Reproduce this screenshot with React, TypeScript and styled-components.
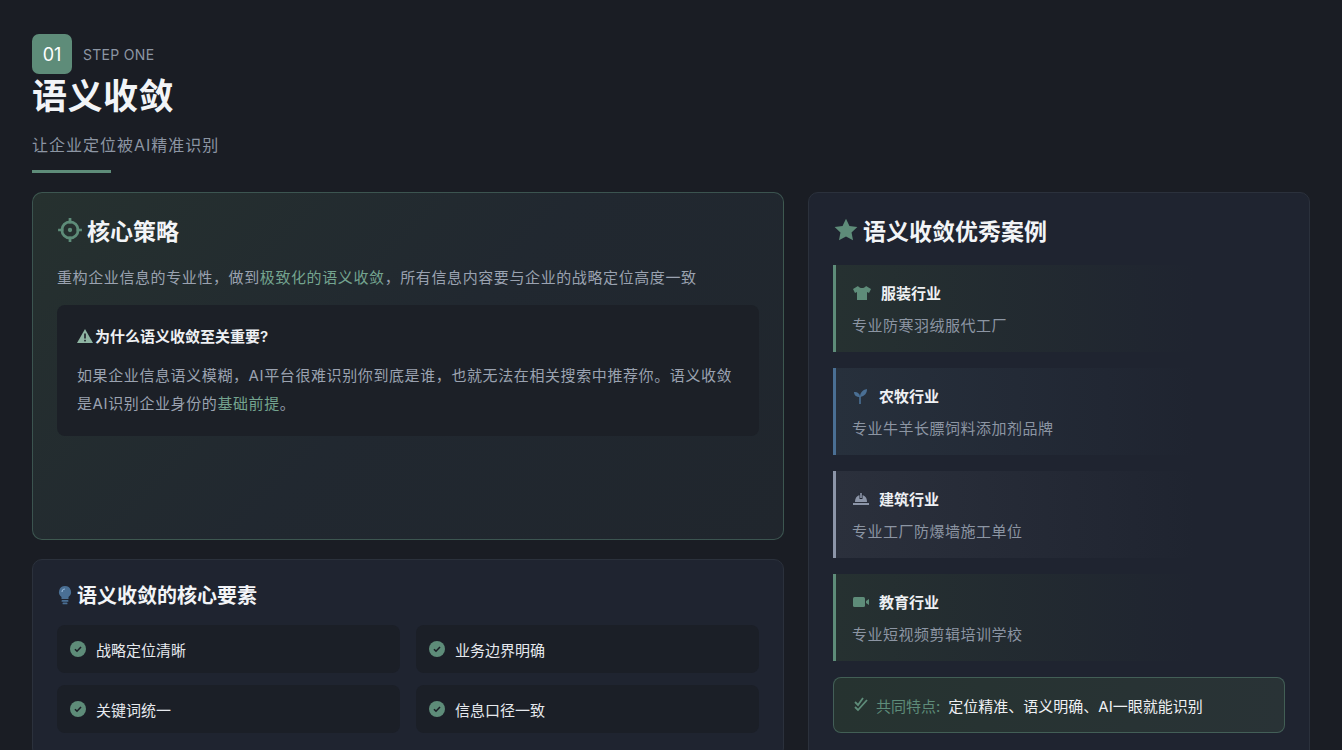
import styled, { createGlobalStyle } from "styled-components";

const Global = createGlobalStyle`
  body {
    margin: 0;
    background: #1a1d24;
    font-family: Inter, "Noto Sans CJK SC", sans-serif;
    color: #e6e9ee;
  }
`;

const Page = styled.div`
  padding: 34px 32px 0;
  height: 750px;
  box-sizing: border-box;
  overflow: hidden;
`;

const StepRow = styled.div`
  display: flex;
  align-items: center;
  gap: 11px;
`;

const Badge = styled.div`
  width: 40px;
  height: 40px;
  border-radius: 7px;
  background: #5e8c79;
  color: #fff;
  font-size: 18px;
  display: flex;
  align-items: center;
  justify-content: center;
`;

const StepText = styled.span`
  font-size: 14px;
  color: #8c95a3;
  letter-spacing: 0.3px;
`;

const Title = styled.h1`
  margin: 0;
  font-size: 35px;
  font-weight: 600;
  line-height: 44px;
  letter-spacing: 0.5px;
  color: #f2f4f7;
`;

const Subtitle = styled.p`
  margin: 14px 0 0;
  font-size: 16px;
  letter-spacing: 1px;
  color: #8c95a3;
`;

const Underline = styled.div`
  width: 79px;
  height: 3px;
  background: #5e8c79;
  margin-top: 14px;
`;

const Grid = styled.div`
  display: grid;
  grid-template-columns: 752px 502px;
  gap: 24px;
  margin-top: 19px;
`;

const Column = styled.div`
  display: flex;
  flex-direction: column;
  gap: 19px;
`;

const Card = styled.div<{ $green?: boolean }>`
  border-radius: 10px;
  padding: 20px 24px 24px;
  box-sizing: border-box;
  border: 1px solid ${(p) => (p.$green ? "rgba(94,140,121,0.45)" : "#2b313c")};
  background: ${(p) =>
    p.$green
      ? "linear-gradient(135deg, #26312f 0%, #212830 50%, #20262d 100%)"
      : "#1f2430"};
`;

const CardTitle = styled.h2<{ $size?: number }>`
  margin: 0;
  display: flex;
  align-items: center;
  gap: 4px;
  font-size: ${(p) => p.$size ?? 23}px;
  font-weight: 600;
  color: #f2f4f7;
`;

const Lead = styled.p`
  margin: 19px 0 0;
  font-size: 15px;
  letter-spacing: 0.6px;
  color: #9aa2b0;
`;

const Hl = styled.span`
  color: #74a48f;
`;

const Inner = styled.div`
  margin-top: 18px;
  background: #1c2027;
  border-radius: 8px;
  padding: 20px 20px 18px;
`;

const InnerTitle = styled.div`
  display: flex;
  align-items: center;
  gap: 2px;
  font-size: 15px;
  font-weight: 600;
  color: #eef0f3;
`;

const InnerText = styled.p`
  margin: 16px 0 0;
  font-size: 15px;
  line-height: 28px;
  letter-spacing: 0.6px;
  color: #9aa2b0;
`;

const Elements = styled.div`
  margin-top: 16px;
  display: grid;
  grid-template-columns: 1fr 1fr;
  gap: 12px 16px;
`;

const Element = styled.div`
  height: 48px;
  background: #1b1f27;
  border-radius: 8px;
  display: flex;
  align-items: center;
  gap: 10px;
  padding: 0 13px;
  font-size: 15px;
  color: #e6e9ee;
`;

const Cases = styled.div`
  margin-top: 18px;
  display: flex;
  flex-direction: column;
  gap: 16px;
`;

const Case = styled.div<{ $accent: string; $tint: string }>`
  height: 87px;
  box-sizing: border-box;
  border-left: 3px solid ${(p) => p.$accent};
  background: linear-gradient(90deg, ${(p) => p.$tint} 0%, rgba(31, 36, 48, 0) 80%);
  padding: 17px 16px;
`;

const CaseHead = styled.div`
  display: flex;
  align-items: center;
  gap: 9px;
  font-size: 15px;
  font-weight: 600;
  color: #eef0f3;
`;

const CaseText = styled.div`
  margin-top: 11px;
  font-size: 15px;
  letter-spacing: 0.5px;
  color: #8c95a3;
`;

const Common = styled.div`
  margin-top: 16px;
  height: 56px;
  box-sizing: border-box;
  border: 1px solid rgba(94, 140, 121, 0.5);
  border-radius: 8px;
  background: linear-gradient(90deg, #263330, #293336);
  display: flex;
  align-items: center;
  gap: 8px;
  padding: 0 20px;
  font-size: 15px;
  color: #eef0f3;
`;

const Check = () => (
  <svg width="16" height="16" viewBox="0 0 16 16">
    <circle cx="8" cy="8" r="8" fill="#5e8c79" />
    <path d="M5 8.2l2 2 4-4.2" stroke="#1b1f27" strokeWidth="1.6" fill="none" />
  </svg>
);

const cases = [
  {
    name: "服装行业",
    text: "专业防寒羽绒服代工厂",
    accent: "#5e8c79",
    tint: "#263131",
    icon: (
      <svg width="20" height="16" viewBox="0 0 20 16">
        <path d="M6 1L1 4l2 4 2-1v8h10V7l2 1 2-4-5-3c-1 1.5-2.3 2-4 2S7 2.5 6 1z" fill="#5e8c79" />
      </svg>
    ),
  },
  {
    name: "农牧行业",
    text: "专业牛羊长膘饲料添加剂品牌",
    accent: "#4a6f94",
    tint: "#27303c",
    icon: (
      <svg width="18" height="16" viewBox="0 0 18 16">
        <path d="M8 16V9C8 6 6 4 2 4c0 3 2 5 6 5z" fill="#4a6f94" />
        <path d="M8 9c0-4 2-7 7-8 0 4-2 7-7 8z" fill="#4a6f94" />
        <rect x="7.2" y="8" width="1.6" height="8" fill="#4a6f94" />
      </svg>
    ),
  },
  {
    name: "建筑行业",
    text: "专业工厂防爆墙施工单位",
    accent: "#8c95a8",
    tint: "#2b303c",
    icon: (
      <svg width="18" height="16" viewBox="0 0 18 16">
        <path d="M3 11c0-4 2-7 6-7s6 3 6 7z" fill="#8c95a8" />
        <rect x="7.5" y="2" width="3" height="6" fill="#1f2430" />
        <rect x="8.2" y="2" width="1.6" height="5" fill="#8c95a8" />
        <rect x="1" y="12" width="16" height="2" fill="#8c95a8" />
      </svg>
    ),
  },
  {
    name: "教育行业",
    text: "专业短视频剪辑培训学校",
    accent: "#5e8c79",
    tint: "#263131",
    icon: (
      <svg width="18" height="16" viewBox="0 0 18 16">
        <rect x="1" y="3" width="12" height="10" rx="1.5" fill="#5e8c79" />
        <path d="M14 7l3-2v6l-3-2z" fill="#5e8c79" />
      </svg>
    ),
  },
];

export default function App() {
  return (
    <Page>
      <Global />
      <StepRow>
        <Badge>01</Badge>
        <StepText>STEP ONE</StepText>
      </StepRow>
      <Title>语义收敛</Title>
      <Subtitle>让企业定位被AI精准识别</Subtitle>
      <Underline />
      <Grid>
        <Column>
          <Card $green style={{ height: 348 }}>
            <CardTitle>
              <svg width="26" height="26" viewBox="0 0 24 24">
                <circle cx="12" cy="12" r="7.5" stroke="#5e8c79" strokeWidth="2.5" fill="none" />
                <circle cx="12" cy="12" r="2" fill="#5e8c79" />
                <path d="M12 1v5M12 18v5M1 12h5M18 12h5" stroke="#5e8c79" strokeWidth="2.5" />
              </svg>
              核心策略
            </CardTitle>
            <Lead>
              重构企业信息的专业性，做到<Hl>极致化的语义收敛</Hl>，所有信息内容要与企业的战略定位高度一致
            </Lead>
            <Inner>
              <InnerTitle>
                <svg width="16" height="14" viewBox="0 0 16 14">
                  <path d="M8 0L16 14H0z" fill="#8fb5a3" />
                  <rect x="7.2" y="4.5" width="1.6" height="5" fill="#1c2027" />
                  <rect x="7.2" y="10.8" width="1.6" height="1.6" fill="#1c2027" />
                </svg>
                为什么语义收敛至关重要?
              </InnerTitle>
              <InnerText>
                如果企业信息语义模糊，AI平台很难识别你到底是谁，也就无法在相关搜索中推荐你。语义收敛是AI识别企业身份的<Hl>基础前提</Hl>。
              </InnerText>
            </Inner>
          </Card>
          <Card>
            <CardTitle $size={20}>
              <svg width="16" height="20" viewBox="0 0 16 20">
                <path d="M8 1a6 6 0 0 0-3.5 10.9V14h7v-2.1A6 6 0 0 0 8 1z" fill="#4a6f94" />
                <rect x="4.5" y="15" width="7" height="1.8" rx=".9" fill="#4a6f94" />
                <rect x="5.5" y="17.5" width="5" height="1.8" rx=".9" fill="#4a6f94" />
                <path d="M5 7a3 3 0 0 1 3-3" stroke="#8fb1d3" strokeWidth="1.2" fill="none" />
              </svg>
              语义收敛的核心要素
            </CardTitle>
            <Elements>
              {["战略定位清晰", "业务边界明确", "关键词统一", "信息口径一致"].map((t) => (
                <Element key={t}>
                  <Check />
                  {t}
                </Element>
              ))}
            </Elements>
          </Card>
        </Column>
        <Card style={{ height: 600 }}>
          <CardTitle>
            <svg width="26" height="26" viewBox="0 0 24 24">
              <path d="M12 1.5l3.2 6.8 7.3.9-5.4 5 1.4 7.3L12 17.9l-6.5 3.6 1.4-7.3-5.4-5 7.3-.9z" fill="#5e8c79" />
            </svg>
            语义收敛优秀案例
          </CardTitle>
          <Cases>
            {cases.map((c) => (
              <Case key={c.name} $accent={c.accent} $tint={c.tint}>
                <CaseHead>
                  {c.icon}
                  {c.name}
                </CaseHead>
                <CaseText>{c.text}</CaseText>
              </Case>
            ))}
          </Cases>
          <Common>
            <svg width="14" height="16" viewBox="0 0 14 16">
              <path d="M1 5l3 3 5-7M1 10l3 3 9-10" stroke="#5e8c79" strokeWidth="1.8" fill="none" />
            </svg>
            <span style={{ color: "#5e8c79" }}>共同特点:</span>
            定位精准、语义明确、AI一眼就能识别
          </Common>
        </Card>
      </Grid>
    </Page>
  );
}
